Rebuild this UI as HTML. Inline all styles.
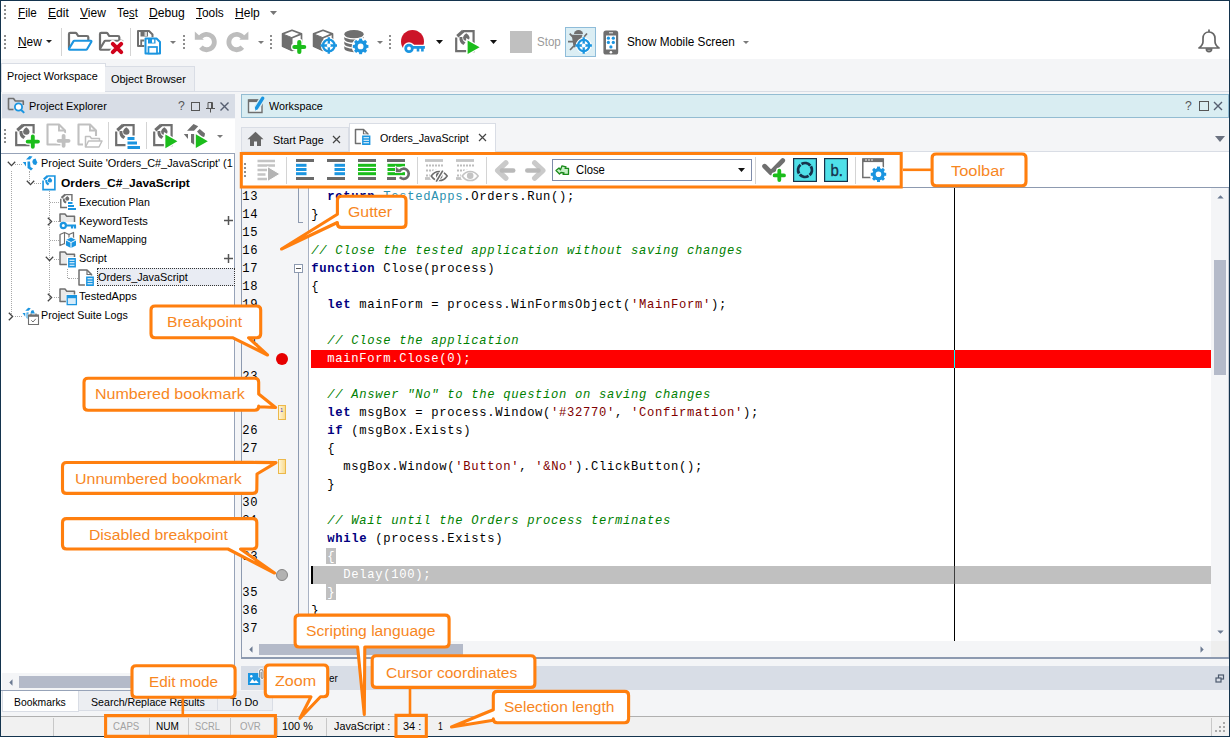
<!DOCTYPE html>
<html lang="en"><head><meta charset="utf-8"><title>Code Editor</title>
<style>
html,body{margin:0;padding:0}
body{width:1230px;height:738px;position:relative;overflow:hidden;background:#f4f5f7;font-family:"Liberation Sans",sans-serif}
div,.a{position:absolute}
.t{position:absolute;white-space:nowrap;transform-origin:0 50%}
.c{position:absolute;white-space:pre;font-family:"Liberation Mono",monospace;font-size:12.2px;letter-spacing:.68px;line-height:18px;height:18px;left:311.3px;color:#000}
.c .k{color:#000080;font-weight:bold}
.c .m{color:#008000;font-style:italic}
.c .s{color:#800000}
.c .y{color:#2b91af}
.n{position:absolute;white-space:pre;font-family:"Liberation Mono",monospace;font-size:12.2px;letter-spacing:.68px;line-height:18px;left:242.3px;color:#000}
u{text-decoration:underline;text-underline-offset:1px}
</style></head><body>
<div style="left:0px;top:0px;width:1230px;height:737px;background:#14344e;"></div>
<div style="left:0px;top:737px;width:1230px;height:1px;background:#fff;"></div>
<div style="left:1px;top:1px;width:1228px;height:735px;background:#f4f5f7;"></div>
<div style="left:1px;top:1px;width:1228px;height:58px;background:#fff;"></div>
<div style="left:1px;top:91px;width:1228px;height:1px;background:#d9dde5;"></div>
<div style="left:1px;top:63px;width:105px;height:29px;background:#fff;border:1px solid #d9dde5;border-bottom:none;box-sizing:border-box;"></div>
<div style="left:105px;top:66px;width:90px;height:25px;background:#eceef2;border:1px solid #d9dde5;border-left:none;border-bottom:none;box-sizing:border-box;"></div>
<div style="left:1px;top:119px;width:234px;height:34px;background:#fff;"></div>
<div style="left:2px;top:94px;width:233px;height:24px;background:#d8dde6;"></div>
<div style="left:1px;top:153px;width:234px;height:538px;background:#fff;border:1px solid #97a3b8;border-left:none;box-sizing:border-box;"></div>
<div style="left:2px;top:673px;width:232px;height:17px;background:#f4f5f7;"></div>
<div style="left:19px;top:676px;width:200px;height:12px;background:#b4bac9;"></div>
<svg class="a" style="left:9px;top:679px" width="4" height="7"><path d="M3.5 .3v6.4L.3 3.5z" fill="#6b7a92"/></svg>
<div style="left:2px;top:691px;width:77px;height:21px;background:#fff;border:1px solid #d9dde5;border-top:none;box-sizing:border-box;"></div>
<div style="left:79px;top:691px;width:139px;height:20px;background:#eceef2;border:1px solid #d9dde5;border-left:none;border-top:none;box-sizing:border-box;"></div>
<div style="left:218px;top:691px;width:55px;height:20px;background:#eceef2;border:1px solid #d9dde5;border-left:none;border-top:none;box-sizing:border-box;"></div>
<div style="left:241px;top:94px;width:988px;height:24px;background:#d9edf2;border:1px solid #93bcd2;box-sizing:border-box;"></div>
<div style="left:241px;top:151px;width:988px;height:1px;background:#d9dde5;"></div>
<div style="left:241px;top:127px;width:108px;height:24px;background:#eceef2;border:1px solid #d9dde5;border-bottom:none;box-sizing:border-box;"></div>
<div style="left:349px;top:123px;width:147px;height:29px;background:#fff;border:1px solid #d9dde5;border-bottom:none;box-sizing:border-box;"></div>
<div style="left:241px;top:152px;width:988px;height:35px;background:#fff;"></div>
<div style="left:241px;top:187px;width:988px;height:1px;background:#8d9ab0;"></div>
<div style="left:241px;top:188px;width:1px;height:470px;background:#8d9ab0;"></div>
<div style="left:242px;top:188px;width:66px;height:453px;background:#f4f5f7;"></div>
<div style="left:308px;top:188px;width:1px;height:453px;background:#a9b2c3;"></div>
<div style="left:309px;top:188px;width:902px;height:453px;background:#fff;"></div>
<div style="left:1211px;top:188px;width:17px;height:453px;background:#f4f5f7;"></div>
<div style="left:1228px;top:188px;width:1px;height:470px;background:#c9cdd6;"></div>
<div style="left:242px;top:641px;width:969px;height:16px;background:#f4f5f7;"></div>
<div style="left:1211px;top:641px;width:17px;height:16px;background:#eeeeee;"></div>
<div style="left:241px;top:657px;width:988px;height:1.6px;background:#8d9ab0;"></div>
<div style="left:1214px;top:260px;width:12px;height:115px;background:#b4bac9;"></div>
<svg class="a" style="left:1217px;top:195px" width="7" height="4"><path d="M.3 3.5h6.4L3.5 .3z" fill="#6b7a92"/></svg>
<svg class="a" style="left:1217px;top:630px" width="7" height="4"><path d="M.3 .5h6.4L3.5 3.7z" fill="#6b7a92"/></svg>
<div style="left:259px;top:644px;width:204px;height:11px;background:#b4bac9;"></div>
<svg class="a" style="left:249px;top:646px" width="4" height="7"><path d="M3.5 .3v6.4L.3 3.5z" fill="#6b7a92"/></svg>
<svg class="a" style="left:1200px;top:646px" width="4" height="7"><path d="M.5 .3v6.4L3.7 3.5z" fill="#6b7a92"/></svg>
<div style="left:241px;top:666px;width:988px;height:24px;background:#d8dde6;"></div>
<div style="left:1px;top:716px;width:1228px;height:1px;background:#b0b0b0;"></div>
<div style="left:1px;top:717px;width:1228px;height:19px;background:#f1f1f1;"></div>
<div style="left:53px;top:718px;width:1px;height:18px;background:#c8c8c8;"></div>
<div style="left:149px;top:718px;width:1px;height:18px;background:#c8c8c8;"></div>
<div style="left:188px;top:718px;width:1px;height:18px;background:#c8c8c8;"></div>
<div style="left:230px;top:718px;width:1px;height:18px;background:#c8c8c8;"></div>
<div style="left:277px;top:718px;width:1px;height:18px;background:#c8c8c8;"></div>
<div style="left:326px;top:718px;width:1px;height:18px;background:#c8c8c8;"></div>
<div style="left:1211px;top:718px;width:1px;height:18px;background:#c8c8c8;"></div>
<div style="left:4px;top:5px;width:2px;height:2px;background:#8e8e8e;"></div>
<div style="left:4px;top:9px;width:2px;height:2px;background:#8e8e8e;"></div>
<div style="left:4px;top:13px;width:2px;height:2px;background:#8e8e8e;"></div>
<div style="left:4px;top:17px;width:2px;height:2px;background:#8e8e8e;"></div>
<span class="t" style="left:17.6px;top:4.84px;font-size:12px;line-height:16px;color:#000;transform:scaleX(0.9722);"><u>F</u>ile</span>
<span class="t" style="left:47.6px;top:4.84px;font-size:12px;line-height:16px;color:#000;transform:scaleX(1.0059);"><u>E</u>dit</span>
<span class="t" style="left:79.6px;top:4.84px;font-size:12px;line-height:16px;color:#000;transform:scaleX(1.0002);"><u>V</u>iew</span>
<span class="t" style="left:116.6px;top:4.84px;font-size:12px;line-height:16px;color:#000;transform:scaleX(0.9451);">Te<u>s</u>t</span>
<span class="t" style="left:148.6px;top:4.84px;font-size:12px;line-height:16px;color:#000;transform:scaleX(1.0124);"><u>D</u>ebug</span>
<span class="t" style="left:195.6px;top:4.84px;font-size:12px;line-height:16px;color:#000;transform:scaleX(0.9923);"><u>T</u>ools</span>
<span class="t" style="left:234.6px;top:4.84px;font-size:12px;line-height:16px;color:#000;transform:scaleX(1.0048);"><u>H</u>elp</span>
<svg class="a" style="left:270px;top:11px" width="7" height="4"><path d="M0 0h7L3.5 4z" fill="#767676"/></svg>
<div style="left:4px;top:35px;width:2px;height:2px;background:#8e8e8e;"></div>
<div style="left:4px;top:39px;width:2px;height:2px;background:#8e8e8e;"></div>
<div style="left:4px;top:43px;width:2px;height:2px;background:#8e8e8e;"></div>
<div style="left:4px;top:47px;width:2px;height:2px;background:#8e8e8e;"></div>
<span class="t" style="left:17.6px;top:33.84px;font-size:12px;line-height:16px;color:#000;transform:scaleX(0.9914);"><u>N</u>ew</span>
<svg class="a" style="left:46px;top:40px" width="6" height="3"><path d="M0 0h6L3.0 3z" fill="#222"/></svg>
<div style="left:61px;top:28px;width:1px;height:28px;background:#d4d4d4;"></div>
<div style="left:130px;top:28px;width:1px;height:28px;background:#d4d4d4;"></div>
<svg class="a" style="left:170px;top:41px" width="6" height="3"><path d="M0 0h6L3.0 3z" fill="#7a7a7a"/></svg>
<div style="left:183px;top:35px;width:2px;height:2px;background:#8e8e8e;"></div>
<div style="left:183px;top:39px;width:2px;height:2px;background:#8e8e8e;"></div>
<div style="left:183px;top:43px;width:2px;height:2px;background:#8e8e8e;"></div>
<div style="left:183px;top:47px;width:2px;height:2px;background:#8e8e8e;"></div>
<svg class="a" style="left:258px;top:41px" width="6" height="3"><path d="M0 0h6L3.0 3z" fill="#7a7a7a"/></svg>
<div style="left:270px;top:35px;width:2px;height:2px;background:#8e8e8e;"></div>
<div style="left:270px;top:39px;width:2px;height:2px;background:#8e8e8e;"></div>
<div style="left:270px;top:43px;width:2px;height:2px;background:#8e8e8e;"></div>
<div style="left:270px;top:47px;width:2px;height:2px;background:#8e8e8e;"></div>
<svg class="a" style="left:377px;top:41px" width="6" height="3"><path d="M0 0h6L3.0 3z" fill="#7a7a7a"/></svg>
<div style="left:389px;top:35px;width:2px;height:2px;background:#8e8e8e;"></div>
<div style="left:389px;top:39px;width:2px;height:2px;background:#8e8e8e;"></div>
<div style="left:389px;top:43px;width:2px;height:2px;background:#8e8e8e;"></div>
<div style="left:389px;top:47px;width:2px;height:2px;background:#8e8e8e;"></div>
<svg class="a" style="left:436px;top:40px" width="7" height="4"><path d="M0 0h7L3.5 4z" fill="#111"/></svg>
<svg class="a" style="left:490px;top:40px" width="7" height="4"><path d="M0 0h7L3.5 4z" fill="#111"/></svg>
<div style="left:510px;top:31px;width:22px;height:22px;background:#c0c0c0;"></div>
<span class="t" style="left:536.6px;top:33.84px;font-size:12px;line-height:16px;color:#9a9a9a;transform:scaleX(0.9641);">Stop</span>
<div style="left:565px;top:27px;width:31px;height:30px;background:#dbeef4;border:1px solid #8ebcd9;box-sizing:border-box;"></div>
<span class="t" style="left:626.6px;top:33.84px;font-size:12px;line-height:16px;color:#000;transform:scaleX(0.9795);">Show Mobile Screen</span>
<svg class="a" style="left:743px;top:41px" width="6" height="3"><path d="M0 0h6L3.0 3z" fill="#7a7a7a"/></svg>
<svg class="a" style="left:67px;top:30px" width="27" height="22" viewBox="0 0 27 22"><path d="M2 18.5V4a1.2 1.2 0 0 1 1.2-1.2h5.3a1.2 1.2 0 0 1 1 .5l1.7 2.7h8.8a1.3 1.3 0 0 1 1.3 1.3V10.5" fill="none" stroke="#6f6f6f" stroke-width="2.2" stroke-linejoin="round" stroke-linecap="round"/><path d="M7.4 10.8H23.8a.7.7 0 0 1 .6 1L20 19.2a1.2 1.2 0 0 1 -1 .6H2.6a.7.7 0 0 1 -.6-1L6.4 11.4a1.2 1.2 0 0 1 1-.6z" fill="#fff" stroke="#1b95e0" stroke-width="2.1" stroke-linejoin="round"/></svg>
<svg class="a" style="left:98px;top:30px" width="27" height="26" viewBox="0 0 27 26"><path d="M2 18.5V4a1.2 1.2 0 0 1 1.2-1.2h5.3a1.2 1.2 0 0 1 1 .5l1.7 2.7h8.8a1.3 1.3 0 0 1 1.3 1.3V10.5" fill="none" stroke="#6f6f6f" stroke-width="2.2" stroke-linejoin="round" stroke-linecap="round"/><path d="M7.4 10.8H23.8a.7.7 0 0 1 .6 1L20 19.2a1.2 1.2 0 0 1 -1 .6H2.6a.7.7 0 0 1 -.6-1L6.4 11.4a1.2 1.2 0 0 1 1-.6z" fill="#fff" stroke="#6f6f6f" stroke-width="2.1" stroke-linejoin="round"/><path d="M14.8 13.8l8.4 8.4M23.2 13.8L14.8 22.2" stroke="#fff" stroke-width="7" stroke-linecap="round"/><path d="M14.8 13.8l8.4 8.4M23.2 13.8l-8.4 8.4" stroke="#d0021b" stroke-width="4" stroke-linecap="round"/></svg>
<svg class="a" style="left:136px;top:29px" width="26" height="26" viewBox="0 0 26 26"><path d="M2 2h11l3.5 3.5V17H2z" fill="#fff" stroke="#6f6f6f" stroke-width="2" stroke-linejoin="round"/><rect x="4.5" y="2" width="7.5" height="5.5" fill="#6f6f6f"/><rect x="8.5" y="3" width="2.5" height="4" fill="#d8d8d8"/><path d="M5.2 17v-5.5h4" fill="none" stroke="#6f6f6f" stroke-width="1.8"/><path d="M8.3 8.3h13.4l4 4V25.8H8.3z" fill="#fff"/><path d="M9.5 9.5h11l3.5 3.5V24.5H9.5z" fill="#fff" stroke="#1b95e0" stroke-width="2" stroke-linejoin="round"/><rect x="12" y="9.5" width="7.5" height="5" fill="#1b95e0"/><rect x="16" y="10.5" width="2.2" height="3.2" fill="#fff"/><rect x="12.5" y="18" width="8.5" height="6.5" fill="#fff" stroke="#1b95e0" stroke-width="1.7"/></svg>
<svg class="a" style="left:194px;top:30px" width="24" height="24" viewBox="0 0 24 24"><path d="M6.6 7.3A7.7 7.7 0 1 1 6.9 17.2" fill="none" stroke="#bdbdbd" stroke-width="4.8"/><path d="M0.8 1.6L9.8 9.8H0.8z" fill="#bdbdbd"/></svg>
<svg class="a" style="left:225px;top:30px" width="24" height="24" viewBox="0 0 24 24"><g transform="translate(24.2,0) scale(-1,1)"><path d="M6.6 7.3A7.7 7.7 0 1 1 6.9 17.2" fill="none" stroke="#bdbdbd" stroke-width="4.8"/><path d="M0.8 1.6L9.8 9.8H0.8z" fill="#bdbdbd"/></g></svg>
<svg class="a" style="left:281px;top:29px" width="27" height="27" viewBox="0 0 27 27"><path d="M1.6 4.9L11 1.3l9.5 3.6v12.3L11 21.5 1.6 17.2z" fill="#fff" stroke="#6f6f6f" stroke-width="1.7" stroke-linejoin="round"/><path d="M1.6 4.9L11 8.7v12.8L1.6 17.2z" fill="#6f6f6f" stroke="#6f6f6f" stroke-width="1" stroke-linejoin="round"/><path d="M11 8.7l9.5-3.8" stroke="#6f6f6f" stroke-width="1.7"/><path d="M13.400000000000002 18h9.799999999999999M18.3 13.100000000000001v9.799999999999999" stroke="#fff" stroke-width="6.800000000000001" stroke-linecap="round"/><path d="M13.400000000000002 18h9.799999999999999M18.3 13.100000000000001v9.799999999999999" stroke="#1bbd1b" stroke-width="4.2" stroke-linecap="round"/></svg>
<svg class="a" style="left:312px;top:29px" width="28" height="28" viewBox="0 0 28 28"><path d="M1.6 4.9L11 1.3l9.5 3.6v12.3L11 21.5 1.6 17.2z" fill="#fff" stroke="#6f6f6f" stroke-width="1.7" stroke-linejoin="round"/><path d="M1.6 4.9L11 8.7v12.8L1.6 17.2z" fill="#6f6f6f" stroke="#6f6f6f" stroke-width="1" stroke-linejoin="round"/><path d="M11 8.7l9.5-3.8" stroke="#6f6f6f" stroke-width="1.7"/><circle cx="16.8" cy="16.5" r="8.0" fill="#fff"/><circle cx="16.8" cy="16.5" r="5.8" fill="none" stroke="#1b95e0" stroke-width="2.3"/><path d="M8.600000000000001 16.5h16.4M16.8 8.3v16.4" stroke="#1b95e0" stroke-width="2.3"/><circle cx="16.8" cy="16.5" r="1.9" fill="#fff"/></svg>
<svg class="a" style="left:343px;top:29px" width="29" height="29" viewBox="0 0 29 29"><path d="M1.3 5a9.7 3.9 0 0 1 19.4 0v14.5a9.7 3.7 0 0 1 -19.4 0z" fill="#6f6f6f"/><path d="M.8 6a10.2 3.9 0 0 0 20.4 0" fill="none" stroke="#fff" stroke-width="1.3"/><path d="M.8 10.6a10.2 3.9 0 0 0 20.4 0" fill="none" stroke="#fff" stroke-width="1.3"/><path d="M.8 15.2a10.2 3.9 0 0 0 20.4 0" fill="none" stroke="#fff" stroke-width="1.3"/><circle cx="17.6" cy="17.4" r="8.9" fill="#fff"/><circle cx="17.6" cy="17.4" r="4.6" fill="none" stroke="#1b95e0" stroke-width="3.4"/><path d="M22.80 17.40L25.40 17.40" stroke="#1b95e0" stroke-width="3"/><path d="M21.28 21.08L23.12 22.92" stroke="#1b95e0" stroke-width="3"/><path d="M17.60 22.60L17.60 25.20" stroke="#1b95e0" stroke-width="3"/><path d="M13.92 21.08L12.08 22.92" stroke="#1b95e0" stroke-width="3"/><path d="M12.40 17.40L9.80 17.40" stroke="#1b95e0" stroke-width="3"/><path d="M13.92 13.72L12.08 11.88" stroke="#1b95e0" stroke-width="3"/><path d="M17.60 12.20L17.60 9.60" stroke="#1b95e0" stroke-width="3"/><path d="M21.28 13.72L23.12 11.88" stroke="#1b95e0" stroke-width="3"/></svg>
<svg class="a" style="left:400px;top:29px" width="27" height="27" viewBox="0 0 27 27"><circle cx="12.5" cy="12.4" r="11.5" fill="#cc1428"/><rect x="11" y="20.5" width="10" height="5" fill="#fff"/><circle cx="9" cy="19.4" r="3.3" fill="#fff" stroke="#fff" stroke-width="5.6"/><path d="M12.5 18.4h12.4M18 18.4v4.2M22.4 18.4v4.2" fill="none" stroke="#fff" stroke-width="5.4"/><circle cx="9" cy="19.4" r="3.3" fill="#fff" stroke="#1b95e0" stroke-width="2.8"/><path d="M12.5 18.4h12.4M18 18.4v4.2M22.4 18.4v4.2" fill="none" stroke="#1b95e0" stroke-width="2.6"/></svg>
<svg class="a" style="left:453.5px;top:28.6px" width="28" height="28" viewBox="0 0 28 28"><path d="M2.2 8V22.2H19.6V2.2H8.6z" fill="#fff"/><path d="M2.2 8.6V22.2H19.6V2.1H9" fill="none" stroke="#6f6f6f" stroke-width="2.2"/><path d="M3.3 7.2L9.2 2" stroke="#6f6f6f" stroke-width="3.2"/><path d="M12.3 4.2C14 5.5 15.5 7 15.5 8.6A3.2 3.2 0 0 1 9.1 8.6C9.1 7 10.6 5.5 12.3 4.2z" fill="#6f6f6f"/><path d="M5.5 8h2.9c-.2 2.6.8 4.3 3.1 5.3l-2 2.7c-2.9-1.4-4.5-4.2-4-8z" fill="#6f6f6f"/><path d="M12.1 9.0L28.1 18.3L12.1 27.6z" fill="#fff"/><path d="M13.6 11.5L25.6 18.3L13.6 25.1z" fill="#1bbd1b"/></svg>
<svg class="a" style="left:567px;top:28px" width="30" height="28" viewBox="0 0 30 28"><path d="M7 6a4.5 4 0 0 1 9 0z" fill="#6f6f6f"/><path d="M4.7 6.8H15.5L14 11 10 14 8 19.5 6.5 19z" fill="#6f6f6f"/><path d="M1 13.7h5M2.7 5.7l3.3 3.5M3 22l3.8-4M20 5.5l-2.8 3.2" stroke="#6f6f6f" stroke-width="1.7"/><circle cx="16.7" cy="17.5" r="7.8" fill="#fff"/><circle cx="16.7" cy="17.5" r="5.6" fill="none" stroke="#1b95e0" stroke-width="2.3"/><path d="M8.5 17.5h16.4M16.7 9.3v16.4" stroke="#1b95e0" stroke-width="2.3"/><circle cx="16.7" cy="17.5" r="1.9" fill="#fff"/></svg>
<svg class="a" style="left:603px;top:29.5px" width="16" height="25" viewBox="0 0 16 25"><rect x=".4" y=".5" width="14.8" height="24" rx="2.6" fill="#6f6f6f"/><rect x="3" y="5.5" width="10" height="14" fill="#fff"/><circle cx="7.9" cy="22.2" r="1.3" fill="#fff"/><path d="M6 2.8h4" stroke="#fff" stroke-width=".9"/><circle cx="5.4" cy="8.2" r="1.6" fill="#1b95e0"/><circle cx="10.3" cy="8.2" r="1.6" fill="#1b95e0"/><circle cx="5.4" cy="12.4" r="1.6" fill="#1b95e0"/><circle cx="10.3" cy="12.4" r="1.6" fill="#1b95e0"/><circle cx="7.9" cy="16.9" r="1.6" fill="#1b95e0"/></svg>
<svg class="a" style="left:1196px;top:28px" width="26" height="26" viewBox="0 0 26 26"><path d="M13 2v2" stroke="#666" stroke-width="1.7" stroke-linecap="round"/><path d="M13 4c-3.7 0-6 2.8-6 6.4v3.2c0 2.6-1.4 4.6-4 6.4h20c-2.6-1.8-4-3.8-4-6.4v-3.2c0-3.6-2.3-6.4-6-6.4z" fill="#fff" stroke="#666" stroke-width="1.7" stroke-linejoin="round"/><path d="M10.3 21a2.7 2.7 0 0 0 5.4 0z" fill="#aaa" stroke="#666" stroke-width="1.5"/></svg>
<span class="t" style="left:6.6px;top:68.69px;font-size:11px;line-height:15px;color:#000;transform:scaleX(0.9858);">Project Workspace</span>
<span class="t" style="left:110.6px;top:71.69px;font-size:11px;line-height:15px;color:#000;transform:scaleX(0.9948);">Object Browser</span>
<span class="t" style="left:28.6px;top:98.69px;font-size:11px;line-height:15px;color:#000;transform:scaleX(0.9942);">Project Explorer</span>
<span class="t" style="left:177.6px;top:97.00px;font-size:13px;line-height:17px;color:#555;transform:scaleX(0.9405);">?</span>
<svg class="a" style="left:190px;top:100px" width="40" height="13"><rect x="1.5" y="2.5" width="8" height="8" fill="none" stroke="#555"/><path d="M16 8.5h9M18 8.5v-6h4.5v6M21.5 2.5v6M20.5 8.5v4" fill="none" stroke="#555"/><path d="M30.5 2.5l8 8M38.5 2.5l-8 8" stroke="#555e70" stroke-width="1.4"/></svg>
<div style="left:4px;top:129px;width:2px;height:2px;background:#8e8e8e;"></div>
<div style="left:4px;top:133px;width:2px;height:2px;background:#8e8e8e;"></div>
<div style="left:4px;top:137px;width:2px;height:2px;background:#8e8e8e;"></div>
<div style="left:4px;top:141px;width:2px;height:2px;background:#8e8e8e;"></div>
<div style="left:108px;top:122px;width:1px;height:27px;background:#d4d4d4;"></div>
<div style="left:146px;top:122px;width:1px;height:27px;background:#d4d4d4;"></div>
<svg class="a" style="left:217px;top:135px" width="6" height="3"><path d="M0 0h6L3.0 3z" fill="#7a7a7a"/></svg>
<svg class="a" style="left:7px;top:97px" width="19" height="17" viewBox="0 0 19 17"><path d="M1.5 12.5V1.5h5l1.8 2.5h8v4" fill="none" stroke="#6f6f6f" stroke-width="1.6" stroke-linejoin="round"/><path d="M1.5 12.5h5" stroke="#6f6f6f" stroke-width="1.6"/><circle cx="11.5" cy="10" r="3.6" fill="#fff" stroke="#1b95e0" stroke-width="1.8"/><path d="M14 12.7l3.2 3.2" stroke="#1b95e0" stroke-width="2"/></svg>
<svg class="a" style="left:13.5px;top:122.8px" width="28" height="28" viewBox="0 0 28 28"><path d="M2.2 8V22.2H19.6V2.2H8.6z" fill="#fff"/><path d="M2.2 8.6V22.2H19.6V2.1H9" fill="none" stroke="#6f6f6f" stroke-width="2.2"/><path d="M3.3 7.2L9.2 2" stroke="#6f6f6f" stroke-width="3.2"/><path d="M12.3 4.2C14 5.5 15.5 7 15.5 8.6A3.2 3.2 0 0 1 9.1 8.6C9.1 7 10.6 5.5 12.3 4.2z" fill="#6f6f6f"/><path d="M5.5 8h2.9c-.2 2.6.8 4.3 3.1 5.3l-2 2.7c-2.9-1.4-4.5-4.2-4-8z" fill="#6f6f6f"/><path d="M13.650000000000002 18.6h10.299999999999999M18.8 13.450000000000003v10.299999999999999" stroke="#fff" stroke-width="6.5" stroke-linecap="round"/><path d="M13.650000000000002 18.6h10.299999999999999M18.8 13.450000000000003v10.299999999999999" stroke="#1bbd1b" stroke-width="3.9" stroke-linecap="round"/></svg>
<svg class="a" style="left:45.5px;top:123.3px" width="27" height="27" viewBox="0 0 27 27"><path d="M1.5 1.5H13.0L19.0 7.5V21.5H1.5z" fill="#fff" stroke="#c0c0c0" stroke-width="2.1" stroke-linejoin="round"/><path d="M13.0 1.5V7.5H19.0" fill="none" stroke="#c0c0c0" stroke-width="1.9"/><path d="M12.600000000000001 17.8h9.999999999999998M17.6 12.8v9.999999999999998" stroke="#fff" stroke-width="6.4" stroke-linecap="round"/><path d="M12.600000000000001 17.8h9.999999999999998M17.6 12.8v9.999999999999998" stroke="#c0c0c0" stroke-width="3.8" stroke-linecap="round"/></svg>
<svg class="a" style="left:76.8px;top:123.3px" width="27" height="27" viewBox="0 0 27 27"><path d="M1.5 1.5H13.0L19.0 7.5V21.5H1.5z" fill="#fff" stroke="#c0c0c0" stroke-width="2.1" stroke-linejoin="round"/><path d="M13.0 1.5V7.5H19.0" fill="none" stroke="#c0c0c0" stroke-width="1.9"/><path d="M8 24.5V13h5l1.5 2h8.5v3" fill="#fff" stroke="#fff" stroke-width="4"/><path d="M8.5 24V13.5h4.5l1.5 2h8v2.5" fill="#fff" stroke="#c0c0c0" stroke-width="1.5" stroke-linejoin="round"/><path d="M11.5 18h13.5l-3 6h-13.5z" fill="#fff" stroke="#c0c0c0" stroke-width="1.5" stroke-linejoin="round"/></svg>
<svg class="a" style="left:113.7px;top:122.8px" width="28" height="28" viewBox="0 0 28 28"><path d="M2.2 8V22.2H19.6V2.2H8.6z" fill="#fff"/><path d="M2.2 8.6V22.2H19.6V2.1H9" fill="none" stroke="#6f6f6f" stroke-width="2.2"/><path d="M3.3 7.2L9.2 2" stroke="#6f6f6f" stroke-width="3.2"/><path d="M12.3 4.2C14 5.5 15.5 7 15.5 8.6A3.2 3.2 0 0 1 9.1 8.6C9.1 7 10.6 5.5 12.3 4.2z" fill="#6f6f6f"/><path d="M5.5 8h2.9c-.2 2.6.8 4.3 3.1 5.3l-2 2.7c-2.9-1.4-4.5-4.2-4-8z" fill="#6f6f6f"/><path d="M11.5 12.5h16v14H11.5z" fill="#fff"/><path d="M13.5 15.5h7M13.5 20h9.5M13.5 24.5h12.5" stroke="#1b95e0" stroke-width="3"/></svg>
<svg class="a" style="left:151.6px;top:122.8px" width="28" height="28" viewBox="0 0 28 28"><path d="M2.2 8V22.2H19.6V2.2H8.6z" fill="#fff"/><path d="M2.2 8.6V22.2H19.6V2.1H9" fill="none" stroke="#6f6f6f" stroke-width="2.2"/><path d="M3.3 7.2L9.2 2" stroke="#6f6f6f" stroke-width="3.2"/><path d="M12.3 4.2C14 5.5 15.5 7 15.5 8.6A3.2 3.2 0 0 1 9.1 8.6C9.1 7 10.6 5.5 12.3 4.2z" fill="#6f6f6f"/><path d="M5.5 8h2.9c-.2 2.6.8 4.3 3.1 5.3l-2 2.7c-2.9-1.4-4.5-4.2-4-8z" fill="#6f6f6f"/><path d="M11.9 9.0L27.9 18.35L11.9 27.7z" fill="#fff"/><path d="M13.4 11.5L25.4 18.35L13.4 25.2z" fill="#1bbd1b"/></svg>
<svg class="a" style="left:183px;top:123px" width="27" height="27" viewBox="0 0 27 27"><path d="M4 7.7L10.5 1 15.2 3.3 11 7.7z" fill="#6f6f6f"/><path d="M14 8.5L16.7 6 22 10.5 21.5 13.5 19 14.5z" fill="#6f6f6f"/><path d="M.8 11H5V16z" fill="#6f6f6f"/><path d="M8 11H11.5V22L8 19.5z" fill="#6f6f6f"/><path d="M11.3 8.8L27.3 18.15L11.3 27.5z" fill="#fff"/><path d="M12.8 11.3L24.8 18.15L12.8 25.0z" fill="#1bbd1b"/></svg>
<div style="left:11px;top:171px;height:145px;width:0;border-left:1px dotted #a8a8a8"></div>
<div style="left:15px;top:164px;width:7px;height:0;border-top:1px dotted #a8a8a8"></div>
<div style="left:15px;top:316px;width:7px;height:0;border-top:1px dotted #a8a8a8"></div>
<div style="left:29px;top:171px;height:12px;width:0;border-left:1px dotted #a8a8a8"></div>
<div style="left:34px;top:183px;width:7px;height:0;border-top:1px dotted #a8a8a8"></div>
<div style="left:49px;top:191px;height:107px;width:0;border-left:1px dotted #a8a8a8"></div>
<div style="left:50px;top:202px;width:9px;height:0;border-top:1px dotted #a8a8a8"></div>
<div style="left:54px;top:221px;width:5px;height:0;border-top:1px dotted #a8a8a8"></div>
<div style="left:50px;top:240px;width:9px;height:0;border-top:1px dotted #a8a8a8"></div>
<div style="left:54px;top:259px;width:5px;height:0;border-top:1px dotted #a8a8a8"></div>
<div style="left:54px;top:297px;width:5px;height:0;border-top:1px dotted #a8a8a8"></div>
<div style="left:67px;top:267px;height:11px;width:0;border-left:1px dotted #a8a8a8"></div>
<div style="left:68px;top:278px;width:10px;height:0;border-top:1px dotted #a8a8a8"></div>
<div style="left:97px;top:268px;width:138px;height:18px;background:#e9ecf3;border:1px dotted #333;box-sizing:border-box;"></div>
<svg class="a" style="left:7px;top:161px" width="9" height="6" viewBox="0 0 9 6"><path d="M.8 .8L4.5 4.6 8.2 .8" fill="none" stroke="#444" stroke-width="1.3"/></svg>
<svg class="a" style="left:26px;top:180px" width="9" height="6" viewBox="0 0 9 6"><path d="M.8 .8L4.5 4.6 8.2 .8" fill="none" stroke="#444" stroke-width="1.3"/></svg>
<svg class="a" style="left:45px;top:256px" width="9" height="6" viewBox="0 0 9 6"><path d="M.8 .8L4.5 4.6 8.2 .8" fill="none" stroke="#444" stroke-width="1.3"/></svg>
<svg class="a" style="left:47px;top:217px" width="6" height="9" viewBox="0 0 6 9"><path d="M.8 .8L4.6 4.5 .8 8.2" fill="none" stroke="#444" stroke-width="1.3"/></svg>
<svg class="a" style="left:47px;top:293px" width="6" height="9" viewBox="0 0 6 9"><path d="M.8 .8L4.6 4.5 .8 8.2" fill="none" stroke="#444" stroke-width="1.3"/></svg>
<svg class="a" style="left:8px;top:312px" width="6" height="9" viewBox="0 0 6 9"><path d="M.8 .8L4.6 4.5 .8 8.2" fill="none" stroke="#444" stroke-width="1.3"/></svg>
<svg class="a" style="left:22px;top:155px" width="17" height="17" viewBox="0 0 17 17"><path d="M4 4.5L7.5 1 10.5 1.5 8 4.5z" fill="#1b95e0"/><path d="M11 4.5L13.5 3.5 15.3 7.5 14 10 11.5 9.5 10.3 7z" fill="#1b95e0"/><path d="M.8 7H4V11.5z" fill="#1b95e0"/><path d="M5.5 6.5H8L8.5 12 11 13.5 9 15.5 5.5 13z" fill="#1b95e0"/></svg>
<svg class="a" style="left:41px;top:174px" width="17" height="18" viewBox="0 0 17 18"><g transform="scale(.68) translate(.8,.8)"><path d="M2.2 8V22.2H19.6V2.2H8.6z" fill="#fff"/><path d="M2.2 8.6V22.2H19.6V2.1H9" fill="none" stroke="#1b95e0" stroke-width="2.4"/><path d="M3.3 7.2L9.2 2" stroke="#1b95e0" stroke-width="3.2"/><path d="M12.3 4.2C14 5.5 15.5 7 15.5 8.6A3.2 3.2 0 0 1 9.1 8.6C9.1 7 10.6 5.5 12.3 4.2z" fill="#1b95e0"/><path d="M5.5 8h2.9c-.2 2.6.8 4.3 3.1 5.3l-2 2.7c-2.9-1.4-4.5-4.2-4-8z" fill="#1b95e0"/></g></svg>
<svg class="a" style="left:59px;top:193px" width="18" height="18" viewBox="0 0 18 18"><g transform="scale(.64) translate(.6,.4)"><path d="M2.2 8V22.2H19.6V2.2H8.6z" fill="#fff"/><path d="M2.2 8.6V22.2H19.6V2.1H9" fill="none" stroke="#6f6f6f" stroke-width="2.2"/><path d="M3.3 7.2L9.2 2" stroke="#6f6f6f" stroke-width="3.2"/><path d="M12.3 4.2C14 5.5 15.5 7 15.5 8.6A3.2 3.2 0 0 1 9.1 8.6C9.1 7 10.6 5.5 12.3 4.2z" fill="#6f6f6f"/><path d="M5.5 8h2.9c-.2 2.6.8 4.3 3.1 5.3l-2 2.7c-2.9-1.4-4.5-4.2-4-8z" fill="#6f6f6f"/></g><path d="M8 8h10v10H8z" fill="#fff"/><path d="M9 10h4.5M9 13h6M9 16h8" stroke="#1b95e0" stroke-width="1.9"/></svg>
<svg class="a" style="left:59px;top:213px" width="18" height="17" viewBox="0 0 18 17"><path d="M1 13.5V1h5l1.8 2.2H15.5V13.5z" fill="#e9e9e9" stroke="#6f6f6f" stroke-width="1.5" stroke-linejoin="round"/><path d="M0 12.5h18" stroke="#fff" stroke-width="7"/><circle cx="4.3" cy="12.5" r="2.6" fill="#fff" stroke="#1b95e0" stroke-width="2.2"/><path d="M7 12.5h10M13 12.5v3M16 12.5v3" stroke="#1b95e0" stroke-width="2.2"/></svg>
<svg class="a" style="left:59px;top:231px" width="18" height="18" viewBox="0 0 18 18"><path d="M1 3.5l4.5-2 4.5 2 4.5-2v11l-4.5 2-4.5-2-4.5 2z" fill="#fff" stroke="#6f6f6f" stroke-width="1.3" stroke-linejoin="round"/><path d="M5.5 1.5v11M10 3.5v11" stroke="#6f6f6f" stroke-width="1.1"/><circle cx="12" cy="12" r="6" fill="#fff"/><path d="M12 6.5l5 2.5v5.5l-5 2.5-5-2.5V9z" fill="#1b95e0"/><path d="M7 9l5 2.5 5-2.5M12 11.5v5.5" stroke="#fff" stroke-width="1" fill="none"/></svg>
<svg class="a" style="left:59px;top:251px" width="19" height="19" viewBox="0 0 19 19"><path d="M1 13.5V1h5l1.8 2.2H15.5V13.5z" fill="#e9e9e9" stroke="#6f6f6f" stroke-width="1.5" stroke-linejoin="round"/><path d="M8.5 6.5h9v10.5h-9z" fill="#1b95e0" stroke="#fff" stroke-width="1.2"/><path d="M10.5 9.3h5M10.5 11.8h5M10.5 14.3h5" stroke="#fff" stroke-width="1.1"/></svg>
<svg class="a" style="left:78px;top:269px" width="18" height="19" viewBox="0 0 18 19"><path d="M1 1h8l4.5 4.5V16H1z" fill="#fff" stroke="#6f6f6f" stroke-width="1.5" stroke-linejoin="round"/><path d="M9 1v4.5h4.5" fill="none" stroke="#6f6f6f" stroke-width="1.2"/><path d="M7.5 7h9v10.5h-9z" fill="#1b95e0" stroke="#fff" stroke-width="1.2"/><path d="M9.5 9.8h5M9.5 12.3h5M9.5 14.8h5" stroke="#fff" stroke-width="1.1"/></svg>
<svg class="a" style="left:59px;top:288px" width="19" height="19" viewBox="0 0 19 19"><path d="M1 13.5V1h5l1.8 2.2H15.5V13.5z" fill="#e9e9e9" stroke="#6f6f6f" stroke-width="1.5" stroke-linejoin="round"/><path d="M7.5 7h10.5v10H7.5z" fill="#d6ecfa" stroke="#fff" stroke-width="1.2"/><path d="M8.2 7.6h9.2v9H8.2z" fill="#d6ecfa" stroke="#1b95e0" stroke-width="1.3"/><path d="M8.2 9h9.2" stroke="#1b95e0" stroke-width="2.4"/></svg>
<svg class="a" style="left:21px;top:307px" width="19" height="19" viewBox="0 0 19 19"><g transform="scale(.85) translate(1,0)"><path d="M4 4.5L7.5 1 10.5 1.5 8 4.5z" fill="#1b95e0"/><path d="M11 4.5L13.5 3.5 15.3 7.5 14 10 11.5 9.5 10.3 7z" fill="#1b95e0"/><path d="M.8 7H4V11.5z" fill="#1b95e0"/><path d="M5.5 6.5H8L8.5 12 11 13.5 9 15.5 5.5 13z" fill="#1b95e0"/></g><path d="M6.5 6.5h12v12h-12z" fill="#fff"/><path d="M7.5 8h10v9.5h-10z" fill="#fff" stroke="#6f6f6f" stroke-width="1.1"/><path d="M7.5 8.8h10" stroke="#6f6f6f" stroke-width="2"/><path d="M10 6.5v2M15 6.5v2" stroke="#6f6f6f" stroke-width="1.2"/><path d="M10.3 13.3l1.7 1.7 2.8-3.2" fill="none" stroke="#6f6f6f" stroke-width="1"/></svg>
<span class="t" style="left:40.6px;top:156.49px;font-size:11px;line-height:15px;color:#000;transform:scaleX(0.9900);">Project Suite &#x27;Orders_C#_JavaScript&#x27; (1</span>
<span class="t" style="left:60.6px;top:176.39px;font-size:11px;line-height:15px;color:#000;transform:scaleX(1.0914);font-weight:bold;">Orders_C#_JavaScript</span>
<span class="t" style="left:78.6px;top:195.49px;font-size:11px;line-height:15px;color:#000;transform:scaleX(0.9648);">Execution Plan</span>
<span class="t" style="left:78.6px;top:213.69px;font-size:11px;line-height:15px;color:#000;transform:scaleX(1.0048);">KeywordTests</span>
<span class="t" style="left:78.6px;top:232.49px;font-size:11px;line-height:15px;color:#000;transform:scaleX(0.9477);">NameMapping</span>
<span class="t" style="left:78.6px;top:251.49px;font-size:11px;line-height:15px;color:#000;transform:scaleX(0.9887);">Script</span>
<span class="t" style="left:97.6px;top:270.29px;font-size:11px;line-height:15px;color:#000;transform:scaleX(0.9858);">Orders_JavaScript</span>
<span class="t" style="left:78.6px;top:289.09px;font-size:11px;line-height:15px;color:#000;transform:scaleX(1.0055);">TestedApps</span>
<span class="t" style="left:40.6px;top:307.59px;font-size:11px;line-height:15px;color:#000;transform:scaleX(0.9723);">Project Suite Logs</span>
<svg class="a" style="left:224px;top:216px" width="9" height="9" viewBox="0 0 9 9"><path d="M0 4.5h9M4.5 0v9" stroke="#555" stroke-width="1.5"/></svg>
<svg class="a" style="left:224px;top:254px" width="9" height="9" viewBox="0 0 9 9"><path d="M0 4.5h9M4.5 0v9" stroke="#555" stroke-width="1.5"/></svg>
<span class="t" style="left:13.6px;top:694.69px;font-size:11px;line-height:15px;color:#000;transform:scaleX(0.9415);">Bookmarks</span>
<span class="t" style="left:91.1px;top:694.69px;font-size:11px;line-height:15px;color:#000;transform:scaleX(0.9644);">Search/Replace Results</span>
<span class="t" style="left:230.1px;top:694.69px;font-size:11px;line-height:15px;color:#000;transform:scaleX(0.9848);">To Do</span>
<span class="t" style="left:268.6px;top:98.69px;font-size:11px;line-height:15px;color:#000;transform:scaleX(0.9814);">Workspace</span>
<span class="t" style="left:1184.6px;top:97.00px;font-size:13px;line-height:17px;color:#555;transform:scaleX(0.9405);">?</span>
<svg class="a" style="left:1198px;top:100px" width="28" height="12"><rect x="1.5" y="1.5" width="9" height="9" fill="none" stroke="#555"/><path d="M16 2l8 8M24 2l-8 8" stroke="#555e70" stroke-width="1.4"/></svg>
<span class="t" style="left:272.6px;top:132.69px;font-size:11px;line-height:15px;color:#000;transform:scaleX(0.9773);">Start Page</span>
<svg class="a" style="left:332px;top:135px" width="9" height="9"><path d="M1 1l7 7M8 1l-7 7" stroke="#444" stroke-width="1.2"/></svg>
<span class="t" style="left:380.1px;top:130.69px;font-size:11px;line-height:15px;color:#000;transform:scaleX(0.9748);">Orders_JavaScript</span>
<svg class="a" style="left:478px;top:133px" width="9" height="9"><path d="M1 1l7 7M8 1l-7 7" stroke="#444" stroke-width="1.2"/></svg>
<svg class="a" style="left:1215px;top:136px" width="10" height="6"><path d="M0 0h10L5 6z" fill="#6b7280"/></svg>
<svg class="a" style="left:247px;top:96px" width="18" height="18" viewBox="0 0 18 18"><path d="M1.5 4h13.5v12.5H1.5z" fill="#eef7f9" stroke="#6f6f6f" stroke-width="1.4"/><path d="M1.5 4.8h13.5" stroke="#6f6f6f" stroke-width="2.6"/><path d="M9.5 12L15.5 2.5" stroke="#d9eef2" stroke-width="6"/><path d="M9.6 11.8L15.6 2.3" stroke="#1b95e0" stroke-width="3.4" stroke-linecap="round"/><path d="M8 14.8l.8-3.2 2 1.3z" fill="#1b95e0"/></svg>
<svg class="a" style="left:247px;top:131px" width="17" height="16" viewBox="0 0 17 16"><path d="M8.5 .8L.5 8.2h2.5V15h4V10.5h3V15h4V8.2h2.5z" fill="#666"/></svg>
<svg class="a" style="left:354px;top:128px" width="18" height="18" viewBox="0 0 18 18"><path d="M1.5 1.5h8l4.5 4.5V15.5H1.5z" fill="#fff" stroke="#6f6f6f" stroke-width="1.5" stroke-linejoin="round"/><path d="M9.5 1.5V6h4.5" fill="none" stroke="#6f6f6f" stroke-width="1.2"/><path d="M7.5 7h9.5v10.5H7.5z" fill="#1b95e0" stroke="#fff" stroke-width="1.2"/><path d="M9.5 9.8h5.5M9.5 12.3h5.5M9.5 14.8h5.5" stroke="#fff" stroke-width="1.1"/></svg>
<div style="left:244px;top:163px;width:2px;height:2px;background:#8e8e8e;"></div>
<div style="left:244px;top:167px;width:2px;height:2px;background:#8e8e8e;"></div>
<div style="left:244px;top:171px;width:2px;height:2px;background:#8e8e8e;"></div>
<div style="left:244px;top:175px;width:2px;height:2px;background:#8e8e8e;"></div>
<div style="left:286px;top:157px;width:1px;height:27px;background:#d4d4d4;"></div>
<div style="left:417px;top:157px;width:1px;height:27px;background:#d4d4d4;"></div>
<div style="left:486px;top:157px;width:1px;height:27px;background:#d4d4d4;"></div>
<div style="left:755px;top:157px;width:1px;height:27px;background:#d4d4d4;"></div>
<div style="left:855px;top:157px;width:1px;height:27px;background:#d4d4d4;"></div>
<div style="left:552px;top:159px;width:200px;height:22px;background:#fff;border:1px solid #7f8caa;box-sizing:border-box;"></div>
<span class="t" style="left:575.6px;top:161.84px;font-size:12px;line-height:16px;color:#000;transform:scaleX(0.9387);">Close</span>
<svg class="a" style="left:738px;top:168px" width="7" height="4"><path d="M0 0h7L3.5 4z" fill="#111"/></svg>
<svg class="a" style="left:256.5px;top:159.2px" width="24" height="23" viewBox="0 0 24 23"><path d="M.5 2h17.5M.5 6.5h17.5M.5 11h9.5M.5 15.5h8M.5 20h10" stroke="#c4c4c4" stroke-width="2.6"/><path d="M10.5 7.5L23 15 10.5 22.5z" fill="#b4b4b4" stroke="#fff" stroke-width="1"/></svg>
<svg class="a" style="left:296px;top:159.2px" width="18" height="22" viewBox="0 0 18 22"><path d="M0 1.5h18" stroke="#6a6a6a" stroke-width="3"/><path d="M0 19.5h18" stroke="#6a6a6a" stroke-width="3"/><path d="M0 6.3H10.5" stroke="#1b95e0" stroke-width="3"/><path d="M0 10.5H10.5" stroke="#1b95e0" stroke-width="3"/><path d="M0 14.7H10.5" stroke="#1b95e0" stroke-width="3"/></svg>
<svg class="a" style="left:327px;top:159.2px" width="18" height="22" viewBox="0 0 18 22"><path d="M0 1.5h18" stroke="#6a6a6a" stroke-width="3"/><path d="M0 19.5h18" stroke="#6a6a6a" stroke-width="3"/><path d="M7.5 6.3H18" stroke="#1b95e0" stroke-width="3"/><path d="M7.5 10.5H18" stroke="#1b95e0" stroke-width="3"/><path d="M7.5 14.7H18" stroke="#1b95e0" stroke-width="3"/></svg>
<svg class="a" style="left:358px;top:159.2px" width="18" height="22" viewBox="0 0 18 22"><path d="M0 1.5h18" stroke="#6a6a6a" stroke-width="3"/><path d="M0 19.5h18" stroke="#6a6a6a" stroke-width="3"/><path d="M0 6.3H18" stroke="#1bbd1b" stroke-width="3"/><path d="M0 10.5H18" stroke="#1bbd1b" stroke-width="3"/><path d="M0 14.7H18" stroke="#1bbd1b" stroke-width="3"/></svg>
<svg class="a" style="left:387.3px;top:159.2px" width="25" height="24" viewBox="0 0 25 24"><path d="M0 1.5h18" stroke="#6a6a6a" stroke-width="3"/><path d="M0 19.5h9" stroke="#6a6a6a" stroke-width="3"/><path d="M0.5 6.3H18" stroke="#1bbd1b" stroke-width="3"/><path d="M0.5 10.5H18" stroke="#1bbd1b" stroke-width="3"/><path d="M0.5 14.7H18" stroke="#1bbd1b" stroke-width="3"/><g transform="translate(8.3,6.8) scale(.66)"><path d="M6.6 7.3A7.7 7.7 0 1 1 6.9 17.2" fill="none" stroke="#fff" stroke-width="7.5"/><path d="M0.8 1.6L9.8 9.8H0.8z" fill="#fff"/><path d="M-.5 -1L11.5 10.8H-.5z" fill="#fff"/><path d="M6.6 7.3A7.7 7.7 0 1 1 6.9 17.2" fill="none" stroke="#6a6a6a" stroke-width="4"/><path d="M0.8 1.6L9.8 9.8H0.8z" fill="#6a6a6a"/></g></svg>
<svg class="a" style="left:425px;top:159.2px" width="25" height="25" viewBox="0 0 25 25"><path d="M0 1.5h18" stroke="#c4c4c4" stroke-width="2.8"/><path d="M0 19.5h7.5" stroke="#c4c4c4" stroke-width="2.8"/><rect x="1" y="5.5" width="2" height="2" fill="#bdbdbd"/><rect x="4" y="5.5" width="2" height="2" fill="#bdbdbd"/><rect x="7" y="5.5" width="2" height="2" fill="#bdbdbd"/><rect x="10" y="5.5" width="2" height="2" fill="#bdbdbd"/><rect x="13" y="5.5" width="2" height="2" fill="#bdbdbd"/><rect x="16" y="5.5" width="2" height="2" fill="#bdbdbd"/><rect x="1" y="10.5" width="2" height="2" fill="#bdbdbd"/><rect x="4" y="10.5" width="2" height="2" fill="#bdbdbd"/><rect x="7" y="10.5" width="2" height="2" fill="#bdbdbd"/><rect x="10" y="10.5" width="2" height="2" fill="#bdbdbd"/><rect x="1" y="15.5" width="2" height="2" fill="#bdbdbd"/><rect x="4" y="15.5" width="2" height="2" fill="#bdbdbd"/><path d="M4.5 17a9.5 7 0 0 1 19 0a9.5 7 0 0 1 -19 0z" fill="#fff"/><path d="M6.2 17c2.2-3.3 5-4.6 8-4.6s5.8 1.3 8 4.6c-2.2 3.3-5 4.6-8 4.6s-5.8-1.3-8-4.6z" fill="#fff" stroke="#6c6c6c" stroke-width="1.5"/><circle cx="14.2" cy="16.8" r="3.3" fill="#6c6c6c"/><path d="M10.8 23L18.2 11" stroke="#fff" stroke-width="4"/><path d="M11.2 22.6L17.8 11.6" stroke="#6c6c6c" stroke-width="1.7"/></svg>
<svg class="a" style="left:456px;top:159.2px" width="25" height="25" viewBox="0 0 25 25"><path d="M0 1.5h18" stroke="#c4c4c4" stroke-width="2.8"/><path d="M0 19.5h7.5" stroke="#c4c4c4" stroke-width="2.8"/><rect x="1" y="5.5" width="2" height="2" fill="#bdbdbd"/><rect x="4" y="5.5" width="2" height="2" fill="#bdbdbd"/><rect x="7" y="5.5" width="2" height="2" fill="#bdbdbd"/><rect x="10" y="5.5" width="2" height="2" fill="#bdbdbd"/><rect x="13" y="5.5" width="2" height="2" fill="#bdbdbd"/><rect x="16" y="5.5" width="2" height="2" fill="#bdbdbd"/><rect x="1" y="10.5" width="2" height="2" fill="#bdbdbd"/><rect x="4" y="10.5" width="2" height="2" fill="#bdbdbd"/><rect x="7" y="10.5" width="2" height="2" fill="#bdbdbd"/><rect x="10" y="10.5" width="2" height="2" fill="#bdbdbd"/><rect x="1" y="15.5" width="2" height="2" fill="#bdbdbd"/><rect x="4" y="15.5" width="2" height="2" fill="#bdbdbd"/><path d="M4.5 17a9.5 7 0 0 1 19 0a9.5 7 0 0 1 -19 0z" fill="#fff"/><path d="M6.2 17c2.2-3.3 5-4.6 8-4.6s5.8 1.3 8 4.6c-2.2 3.3-5 4.6-8 4.6s-5.8-1.3-8-4.6z" fill="#fff" stroke="#c4c4c4" stroke-width="1.5"/><circle cx="14.2" cy="16.8" r="3.3" fill="#c4c4c4"/></svg>
<svg class="a" style="left:493px;top:159.5px" width="24" height="21" viewBox="0 0 24 21"><path d="M12.8 2.9L4.7 10.5 12.8 18.1" fill="none" stroke="#cacaca" stroke-width="5.4" stroke-linecap="round" stroke-linejoin="round"/><path d="M9 10.5H20.2" stroke="#b9b9b9" stroke-width="4.6" stroke-linecap="round"/></svg>
<svg class="a" style="left:524px;top:159.5px" width="24" height="21" viewBox="0 0 24 21"><g transform="translate(23.5,0) scale(-1,1)"><path d="M12.8 2.9L4.7 10.5 12.8 18.1" fill="none" stroke="#cacaca" stroke-width="5.4" stroke-linecap="round" stroke-linejoin="round"/><path d="M9 10.5H20.2" stroke="#b9b9b9" stroke-width="4.6" stroke-linecap="round"/></g></svg>
<svg class="a" style="left:555px;top:164px" width="15" height="12" viewBox="0 0 15 12"><path d="M1 6.5l3-2.5 1.5 1.8 1.5-4 4 1-1 1.5 3.5 0v6h-5.5l1-1.5-3-.3-1.5 1.5z" fill="#c6efc6" stroke="#1a8a1a" stroke-width="1.3" stroke-linejoin="round"/></svg>
<svg class="a" style="left:761px;top:157px" width="27" height="27" viewBox="0 0 27 27"><path d="M3.6 9.3l6.4 6.4L21.7 3.6" fill="none" stroke="#6f6f6f" stroke-width="4.8" stroke-linecap="round" stroke-linejoin="round"/><path d="M13.600000000000001 18.4h9.4M18.3 13.7v9.4" stroke="#fff" stroke-width="6.4" stroke-linecap="round"/><path d="M13.600000000000001 18.4h9.4M18.3 13.7v9.4" stroke="#1bbd1b" stroke-width="3.8" stroke-linecap="round"/></svg>
<svg class="a" style="left:793px;top:157.5px" width="24" height="24" viewBox="0 0 24 24"><rect x=".6" y=".6" width="22.8" height="22.8" fill="#4fe0e9" stroke="#16324d" stroke-width="1.2"/><circle cx="12" cy="12" r="6.9" fill="none" stroke="#16324d" stroke-width="2.9" stroke-dasharray="9.6 1.24" transform="rotate(-32 12 12)"/></svg>
<svg class="a" style="left:824px;top:157.5px" width="24" height="24" viewBox="0 0 24 24"><rect x=".6" y=".6" width="22.8" height="22.8" fill="#4fe0e9" stroke="#16324d" stroke-width="1.2"/><text x="6.5" y="18" font-family="Liberation Sans,sans-serif" font-size="17" fill="#16324d" stroke="#16324d" stroke-width=".35" textLength="12.5" lengthAdjust="spacingAndGlyphs">b.</text></svg>
<svg class="a" style="left:861px;top:157px" width="28" height="28" viewBox="0 0 28 28"><path d="M1.8 2h20.5v18.5H1.8z" fill="#fff" stroke="#6f6f6f" stroke-width="1.5"/><path d="M1.8 3.3h20.5" stroke="#6f6f6f" stroke-width="3.6"/><circle cx="5" cy="3" r=".8" fill="#fff"/><circle cx="8" cy="3" r=".8" fill="#fff"/><circle cx="11" cy="3" r=".8" fill="#fff"/><circle cx="17.5" cy="17.3" r="8.8" fill="#fff"/><circle cx="17.5" cy="17.3" r="4.5" fill="none" stroke="#1b95e0" stroke-width="3.4"/><path d="M22.60 17.30L25.20 17.30" stroke="#1b95e0" stroke-width="3"/><path d="M21.11 20.91L22.94 22.74" stroke="#1b95e0" stroke-width="3"/><path d="M17.50 22.40L17.50 25.00" stroke="#1b95e0" stroke-width="3"/><path d="M13.89 20.91L12.06 22.74" stroke="#1b95e0" stroke-width="3"/><path d="M12.40 17.30L9.80 17.30" stroke="#1b95e0" stroke-width="3"/><path d="M13.89 13.69L12.06 11.86" stroke="#1b95e0" stroke-width="3"/><path d="M17.50 12.20L17.50 9.60" stroke="#1b95e0" stroke-width="3"/><path d="M21.11 13.69L22.94 11.86" stroke="#1b95e0" stroke-width="3"/></svg>
<div style="left:311px;top:350px;width:900px;height:18px;background:#ff0000;"></div>
<div style="left:311px;top:566px;width:900px;height:18px;background:#c0c0c0;"></div>
<div style="left:311px;top:566px;width:2px;height:18px;background:#000;"></div>
<div style="left:326px;top:548px;width:10px;height:16px;background:#c0c0c0;"></div>
<div style="left:326px;top:584px;width:10px;height:16px;background:#c0c0c0;"></div>
<div style="left:954px;top:188px;width:1px;height:453px;background:#000;"></div>
<div style="left:954px;top:350px;width:1px;height:18px;background:#00ffff;"></div>
<div style="left:954px;top:566px;width:1px;height:18px;background:#3f3f3f;"></div>
<div style="left:298px;top:188px;width:1px;height:35px;background:#8d9ab0;"></div>
<div style="left:298px;top:222px;width:5px;height:1px;background:#8d9ab0;"></div>
<div style="left:298px;top:273px;width:1px;height:368px;background:#8d9ab0;"></div>
<svg class="a" style="left:294px;top:264px" width="9" height="9"><rect x=".5" y=".5" width="8" height="8" fill="#fff" stroke="#8d9ab0"/><path d="M2 4.5h5" stroke="#555"/></svg>
<span class="n" style="top:188px">13</span>
<span class="c" style="top:188px"><span class="k">  return</span> <span class="y">TestedApps</span>.Orders.Run();</span>
<span class="n" style="top:206px">14</span>
<span class="c" style="top:206px">}</span>
<span class="n" style="top:224px">15</span>
<span class="n" style="top:242px">16</span>
<span class="c" style="top:242px"><span class="m">// Close the tested application without saving changes</span></span>
<span class="n" style="top:260px">17</span>
<span class="c" style="top:260px"><span class="k">function</span> Close(process)</span>
<span class="n" style="top:278px">18</span>
<span class="c" style="top:278px">{</span>
<span class="n" style="top:296px">19</span>
<span class="c" style="top:296px"><span class="k">  let</span> mainForm = process.WinFormsObject(<span class="s">'MainForm'</span>);</span>
<span class="n" style="top:314px">20</span>
<span class="n" style="top:332px">21</span>
<span class="c" style="top:332px"><span class="m">  // Close the application</span></span>
<span class="c" style="top:350px"><span style="color:#fff">  mainForm.Close(0);</span></span>
<span class="n" style="top:368px">23</span>
<span class="n" style="top:386px">24</span>
<span class="c" style="top:386px"><span class="m">  // Answer "No" to the question on saving changes</span></span>
<span class="c" style="top:404px"><span class="k">  let</span> msgBox = process.Window(<span class="s">'#32770'</span>, <span class="s">'Confirmation'</span>);</span>
<span class="n" style="top:422px">26</span>
<span class="c" style="top:422px"><span class="k">  if</span> (msgBox.Exists)</span>
<span class="n" style="top:440px">27</span>
<span class="c" style="top:440px">  {</span>
<span class="c" style="top:458px">    msgBox.Window(<span class="s">'Button'</span>, <span class="s">'&amp;No'</span>).ClickButton();</span>
<span class="n" style="top:476px">29</span>
<span class="c" style="top:476px">  }</span>
<span class="n" style="top:494px">30</span>
<span class="n" style="top:512px">31</span>
<span class="c" style="top:512px"><span class="m">  // Wait until the Orders process terminates</span></span>
<span class="n" style="top:530px">32</span>
<span class="c" style="top:530px"><span class="k">  while</span> (process.Exists)</span>
<span class="n" style="top:548px">33</span>
<span class="c" style="top:548px">  <span style="color:#fff">{</span></span>
<span class="c" style="top:566px"><span style="color:#fff">    Delay(100);</span></span>
<span class="n" style="top:584px">35</span>
<span class="c" style="top:584px">  <span style="color:#fff">}</span></span>
<span class="n" style="top:602px">36</span>
<span class="c" style="top:602px">}</span>
<span class="n" style="top:620px">37</span>
<svg class="a" style="left:275px;top:352px" width="14" height="14"><circle cx="7" cy="7" r="6" fill="#e60000"/></svg>
<svg class="a" style="left:275px;top:568px" width="14" height="14"><circle cx="7" cy="7" r="5.5" fill="#b2b2b2" stroke="#858585"/></svg>
<svg class="a" style="left:278px;top:405px" width="9" height="15"><defs><linearGradient id="bk405" x1="0" x2="1"><stop offset="0" stop-color="#fff6d8"/><stop offset="1" stop-color="#f9d98a"/></linearGradient></defs><rect x=".5" y=".5" width="7" height="14" fill="url(#bk405)" stroke="#ecb84a"/><text x="2.2" y="6.5" font-family="Liberation Sans,sans-serif" font-size="5" fill="#3030c0">1</text></svg>
<svg class="a" style="left:278px;top:459px" width="9" height="15"><defs><linearGradient id="bk459" x1="0" x2="1"><stop offset="0" stop-color="#fff6d8"/><stop offset="1" stop-color="#f9d98a"/></linearGradient></defs><rect x=".5" y=".5" width="7" height="14" fill="url(#bk459)" stroke="#ecb84a"/></svg>
<span class="t" style="left:328.6px;top:670.59px;font-size:11px;line-height:15px;color:#000;transform:scaleX(0.8997);">er</span>
<svg class="a" style="left:248px;top:668px" width="17" height="18" viewBox="0 0 17 18"><rect x="0" y="5" width="12.2" height="12" fill="#1b95e0"/><path d="M1.5 15l2.8-4 2.2 2.5 1.5-1.5 2.7 3z" fill="#fff"/><circle cx="3.3" cy="8.3" r="1.2" fill="#fff"/><path d="M11.6 9.5V3.3a1.7 1.7 0 0 1 3.4 0v6.2a.9.9 0 0 1 -1.8 0V4" fill="none" stroke="#fff" stroke-width="2.6"/><path d="M11.6 9.5V3.3a1.7 1.7 0 0 1 3.4 0v6.2a.9.9 0 0 1 -1.8 0V4" fill="none" stroke="#8a8a8a" stroke-width="1.1"/></svg>
<svg class="a" style="left:1214.5px;top:673.5px" width="10" height="10" viewBox="0 0 10 10"><rect x="3.5" y="1" width="5" height="4" fill="none" stroke="#4d5a6e" stroke-width="1.2"/><rect x="1" y="4" width="5" height="4" fill="#d8dde6" stroke="#4d5a6e" stroke-width="1.2"/></svg>
<span class="t" style="left:113.1px;top:718.69px;font-size:11px;line-height:15px;color:#a2a2a2;transform:scaleX(0.8780);">CAPS</span>
<span class="t" style="left:155.6px;top:718.69px;font-size:11px;line-height:15px;color:#000;transform:scaleX(0.9101);">NUM</span>
<span class="t" style="left:195.1px;top:718.69px;font-size:11px;line-height:15px;color:#a2a2a2;transform:scaleX(0.8452);">SCRL</span>
<span class="t" style="left:239.6px;top:718.69px;font-size:11px;line-height:15px;color:#a2a2a2;transform:scaleX(0.8726);">OVR</span>
<span class="t" style="left:281.6px;top:718.69px;font-size:11px;line-height:15px;color:#000;transform:scaleX(0.9875);">100 %</span>
<span class="t" style="left:333.6px;top:718.69px;font-size:11px;line-height:15px;color:#000;transform:scaleX(0.9797);">JavaScript :</span>
<span class="t" style="left:402.6px;top:718.69px;font-size:11px;line-height:15px;color:#000;transform:scaleX(0.9974);">34 :</span>
<span class="t" style="left:437.6px;top:718.69px;font-size:11px;line-height:15px;color:#000;transform:scaleX(0.7846);">1</span>
<div style="left:1223px;top:722px;width:2px;height:2px;background:#a9a9a9;"></div>
<div style="left:1219px;top:726px;width:2px;height:2px;background:#a9a9a9;"></div>
<div style="left:1223px;top:726px;width:2px;height:2px;background:#a9a9a9;"></div>
<div style="left:1215px;top:730px;width:2px;height:2px;background:#a9a9a9;"></div>
<div style="left:1219px;top:730px;width:2px;height:2px;background:#a9a9a9;"></div>
<div style="left:1223px;top:730px;width:2px;height:2px;background:#a9a9a9;"></div>
<svg class="a" style="left:0;top:0;pointer-events:none" width="1230" height="738" viewBox="0 0 1230 738">
<path d="M241.3 153.5H901.2V187H241.3Z" fill="none" stroke="#ff7f0e" stroke-width="3.05" stroke-linejoin="miter"/>
<path d="M903 169.8H931" fill="none" stroke="#ff7f0e" stroke-width="2.6" stroke-linejoin="round"/>
<path d="M936.1 154L1022 154Q1026 154 1026 158L1026 181.7Q1026 185.7 1022 185.7L936.1 185.7Q932.1 185.7 932.1 181.7L932.1 158Q932.1 154 936.1 154Z" fill="#fff" stroke="#ff7f0e" stroke-width="3.1" stroke-linejoin="round"/>
<path d="M341.4 196.3L402 196.3Q406 196.3 406 200.3L406 223.4Q406 227.4 402 227.4L341.4 227.4Q337.4 227.4 337.4 223.4L337.4 222.5L281.5 249L337.4 214.3L337.4 200.3Q337.4 196.3 341.4 196.3Z" fill="#fff" stroke="#ff7f0e" stroke-width="3.1" stroke-linejoin="round"/>
<path d="M155 306L256.7 306Q260.7 306 260.7 310L260.7 333.7Q260.7 337.7 256.7 337.7L248.5 337.7L267.5 355L232.5 337.7L155 337.7Q151 337.7 151 333.7L151 310Q151 306 155 306Z" fill="#fff" stroke="#ff7f0e" stroke-width="3.1" stroke-linejoin="round"/>
<path d="M88 378.3L254.7 378.3Q258.7 378.3 258.7 382.3L258.7 394L275.5 407.5L259 406.7L258.7 406.2Q258.7 410.2 254.7 410.2L88 410.2Q84 410.2 84 406.2L84 382.3Q84 378.3 88 378.3Z" fill="#fff" stroke="#ff7f0e" stroke-width="3.1" stroke-linejoin="round"/>
<path d="M66.5 462.5L253 462.4L276 462.6L257 474L256.8 489.4Q256.8 493.4 252.8 493.4L66.5 493.4Q62.5 493.4 62.5 489.4L62.5 466.5Q62.5 462.5 66.5 462.5Z" fill="#fff" stroke="#ff7f0e" stroke-width="3.1" stroke-linejoin="round"/>
<path d="M66.5 518.6L252.8 518.6Q256.8 518.6 256.8 522.6L256.8 545Q256.8 549 252.8 549L240.5 549L274.5 573L228 549L66.5 549Q62.5 549 62.5 545L62.5 522.6Q62.5 518.6 66.5 518.6Z" fill="#fff" stroke="#ff7f0e" stroke-width="3.1" stroke-linejoin="round"/>
<path d="M136 665.8L231.1 665.8Q235.1 665.8 235.1 669.8L235.1 693.3Q235.1 697.3 231.1 697.3L136 697.3Q132 697.3 132 693.3L132 669.8Q132 665.8 136 665.8Z" fill="#fff" stroke="#ff7f0e" stroke-width="3.1" stroke-linejoin="round"/>
<path d="M182.8 698V715" fill="none" stroke="#ff7f0e" stroke-width="2.6" stroke-linejoin="round"/>
<path d="M105.6 715.6H275.4V736.4H105.6Z" fill="none" stroke="#ff7f0e" stroke-width="3.1" stroke-linejoin="miter"/>
<path d="M269.3 665L323.7 665Q327.7 665 327.7 669L327.7 692.8Q327.7 696.8 323.7 696.8L320.5 696.8L300 718.3L311 696.8L269.3 696.8Q265.3 696.8 265.3 692.8L265.3 669Q265.3 665 269.3 665Z" fill="#fff" stroke="#ff7f0e" stroke-width="3.1" stroke-linejoin="round"/>
<path d="M299.1 615.1L445.1 615.1Q449.1 615.1 449.1 619.1L449.1 643Q449.1 647 445.1 647L364.8 647L364.3 714.5L357.6 647L299.1 647Q295.1 647 295.1 643L295.1 619.1Q295.1 615.1 299.1 615.1Z" fill="#fff" stroke="#ff7f0e" stroke-width="3.1" stroke-linejoin="round"/>
<path d="M376.2 655.7L530.9 655.7Q534.9 655.7 534.9 659.7L534.9 683.4Q534.9 687.4 530.9 687.4L376.2 687.4Q372.2 687.4 372.2 683.4L372.2 659.7Q372.2 655.7 376.2 655.7Z" fill="#fff" stroke="#ff7f0e" stroke-width="3.1" stroke-linejoin="round"/>
<path d="M410 689V715" fill="none" stroke="#ff7f0e" stroke-width="2.6" stroke-linejoin="round"/>
<path d="M396 715.4H426.3V736.5H396Z" fill="none" stroke="#ff7f0e" stroke-width="3.1" stroke-linejoin="miter"/>
<path d="M497.3 691.4L624.6 691.4Q628.6 691.4 628.6 695.4L628.6 718.7Q628.6 722.7 624.6 722.7L497.3 722.7Q493.3 722.7 493.3 718.7L493.3 720.3L451.5 727L493.3 709.7L493.3 695.4Q493.3 691.4 497.3 691.4Z" fill="#fff" stroke="#ff7f0e" stroke-width="3.1" stroke-linejoin="round"/>
</svg>
<span class="t" style="left:950.6px;top:160.50px;font-size:15.3px;line-height:20px;color:#f7871f;transform:scaleX(1.0721);">Toolbar</span>
<span class="t" style="left:348.3px;top:202.40px;font-size:15.3px;line-height:20px;color:#f7871f;transform:scaleX(1.0373);">Gutter</span>
<span class="t" style="left:167.2px;top:311.90px;font-size:15.3px;line-height:20px;color:#f7871f;transform:scaleX(1.0280);">Breakpoint</span>
<span class="t" style="left:95.2px;top:384.20px;font-size:15.3px;line-height:20px;color:#f7871f;transform:scaleX(1.0485);">Numbered bookmark</span>
<span class="t" style="left:75.2px;top:468.70px;font-size:15.3px;line-height:20px;color:#f7871f;transform:scaleX(1.0432);">Unnumbered bookmark</span>
<span class="t" style="left:89.4px;top:524.70px;font-size:15.3px;line-height:20px;color:#f7871f;transform:scaleX(1.0278);">Disabled breakpoint</span>
<span class="t" style="left:148.6px;top:672.40px;font-size:15.3px;line-height:20px;color:#f7871f;transform:scaleX(1.0016);">Edit mode</span>
<span class="t" style="left:274.6px;top:671.30px;font-size:15.3px;line-height:20px;color:#f7871f;transform:scaleX(1.0534);">Zoom</span>
<span class="t" style="left:306.3px;top:621.30px;font-size:15.3px;line-height:20px;color:#f7871f;transform:scaleX(1.0217);">Scripting language</span>
<span class="t" style="left:386.3px;top:662.70px;font-size:15.3px;line-height:20px;color:#f7871f;transform:scaleX(1.0158);">Cursor coordinates</span>
<span class="t" style="left:504.3px;top:697.00px;font-size:15.3px;line-height:20px;color:#f7871f;transform:scaleX(1.0140);">Selection length</span>
</body></html>
